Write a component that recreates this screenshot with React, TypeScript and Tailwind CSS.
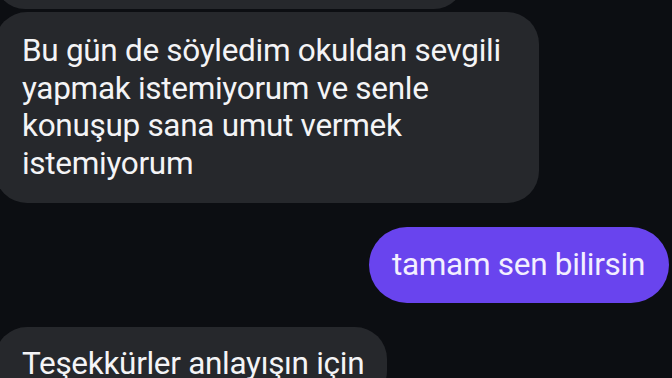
import React from 'react';

const bubbleText = "text-[31.5px] leading-[37.5px] tracking-[-0.3px]";

export default function App() {
  return (
    <div
      className="w-[672px] h-[378px] overflow-hidden bg-[#0c0e12] text-[#f4f4f6]"
      style={{ fontFamily: 'Roboto, "Liberation Sans", sans-serif' }}
    >
      <div className="flex flex-col -mt-[51px]">
        {/* earlier incoming message, mostly scrolled off */}
        <div className="-ml-[5px] w-[469px] h-[60px] rounded-[32px] bg-[#26282c]" />

        <div className={`mt-[3px] -ml-[5px] w-[544px] rounded-[32px] bg-[#26282c] pl-[27px] pr-4 pt-[20px] pb-[21px] ${bubbleText}`}>
          Bu gün de söyledim okuldan sevgili
          <br />
          yapmak istemiyorum ve senle
          <br />
          konuşup sana umut vermek
          <br />
          istemiyorum
        </div>

        <div className="mt-[24px] self-end mr-[3px] h-[76px] flex items-center rounded-full bg-[#6944ee] pl-[23px] pr-[24px] text-[#f3efff]">
          <span className={bubbleText}>tamam sen bilirsin</span>
        </div>

        <div className={`mt-[24px] -ml-[5px] self-start rounded-[32px] bg-[#26282c] pl-[27px] pr-[23px] pt-[18px] pb-[20px] ${bubbleText}`}>
          Teşekkürler anlayışın için
        </div>
      </div>
    </div>
  );
}
